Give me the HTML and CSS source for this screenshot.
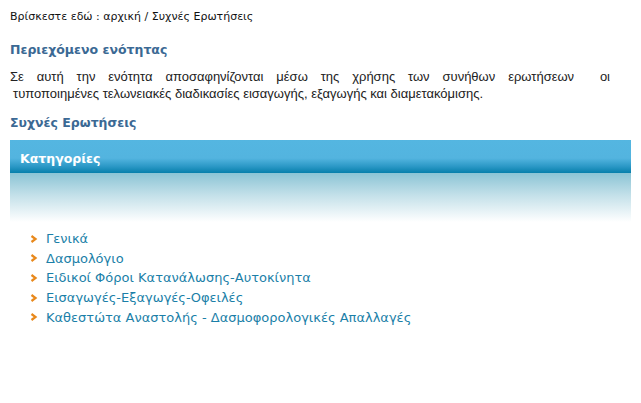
FILE: index.html
```html
<!DOCTYPE html>
<html lang="el">
<head>
<meta charset="utf-8">
<title>Συχνές Ερωτήσεις</title>
<link rel="stylesheet" href="styles.css">
</head>
<body>
<div class="page">
  <div class="crumb">Βρίσκεστε εδώ : <a href="#">αρχική</a> / Συχνές Ερωτήσεις</div>
  <h2 class="title">Περιεχόμενο ενότητας</h2>
  <p class="intro">
    <span class="line1">Σε αυτή την ενότητα αποσαφηνίζονται μέσω της χρήσης των συνήθων ερωτήσεων &nbsp;οι</span>
    <span class="line2">τυποποιημένες τελωνειακές διαδικασίες εισαγωγής, εξαγωγής και διαμετακόμισης.</span>
  </p>
  <h2 class="title faq">Συχνές Ερωτήσεις</h2>
  <div class="box">
    <div class="box-head">Κατηγορίες</div>
    <div class="box-fade"></div>
  </div>
  <ul class="cats">
    <li><svg class="arr" viewBox="0 0 8 8" width="8" height="8"><path d="M1.5 1 L5.5 4 L1.5 7" fill="none" stroke="#e8891c" stroke-width="2.2"/></svg><a href="#">Γενικά</a></li>
    <li><svg class="arr" viewBox="0 0 8 8" width="8" height="8"><path d="M1.5 1 L5.5 4 L1.5 7" fill="none" stroke="#e8891c" stroke-width="2.2"/></svg><a href="#">Δασμολόγιο</a></li>
    <li><svg class="arr" viewBox="0 0 8 8" width="8" height="8"><path d="M1.5 1 L5.5 4 L1.5 7" fill="none" stroke="#e8891c" stroke-width="2.2"/></svg><a href="#">Ειδικοί Φόροι Κατανάλωσης-Αυτοκίνητα</a></li>
    <li><svg class="arr" viewBox="0 0 8 8" width="8" height="8"><path d="M1.5 1 L5.5 4 L1.5 7" fill="none" stroke="#e8891c" stroke-width="2.2"/></svg><a href="#">Εισαγωγές-Εξαγωγές-Οφειλές</a></li>
    <li><svg class="arr" viewBox="0 0 8 8" width="8" height="8"><path d="M1.5 1 L5.5 4 L1.5 7" fill="none" stroke="#e8891c" stroke-width="2.2"/></svg><a href="#">Καθεστώτα Αναστολής - Δασμοφορολογικές Απαλλαγές</a></li>
  </ul>
</div>
</body>
</html>
```
FILE: styles.css
```css
html, body {
  margin: 0;
  padding: 0;
  background: #ffffff;
}
.page {
  padding: 10px 10px 0 10px;
  font-family: "DejaVu Sans", Verdana, sans-serif;
}
.crumb {
  font-family: "DejaVu Sans", sans-serif;
  font-size: 11px;
  line-height: 13px;
  color: #111111;
}
.crumb a {
  color: #111111;
  text-decoration: none;
}
.title {
  margin: 0;
  font-family: "DejaVu Sans", sans-serif;
  font-weight: bold;
  font-size: 12.5px;
  line-height: 16px;
  color: #3b6994;
  margin-top: 19px;
}
.intro {
  margin: 10px 0 0 0;
  width: 600px;
  font-family: "Liberation Sans", Arial, sans-serif;
  font-size: 13px;
  line-height: 17px;
  color: #222222;
}
.line1 {
  display: block;
  text-align: justify;
  text-align-last: justify;
}
.line2 {
  display: block;
  padding-left: 3px;
}
.faq {
  margin-top: 13px;
}
.box {
  margin-top: 9px;
  width: 621px;
}
.box-head {
  height: 33px;
  box-sizing: border-box;
  padding: 11px 0 0 10px;
  font-family: "DejaVu Sans", sans-serif;
  font-weight: bold;
  font-size: 12.5px;
  line-height: 16px;
  color: #ffffff;
  background: linear-gradient(to bottom, #54b6e1 0%, #53b4df 55%, #2b98c6 80%, #067fab 100%);
}
.box-fade {
  height: 49px;
  background: linear-gradient(to bottom, #8bc4d5 0%, #c3e0e9 45%, #ffffff 100%);
}
.cats {
  list-style: none;
  margin: 7px 0 0 0;
  padding: 0 0 0 20px;
}
.cats li {
  display: flex;
  align-items: center;
  height: 19.6px;
  font-size: 13px;
}
.arr {
  margin-right: 8px;
}
.cats a {
  color: #1b7fa8;
  text-decoration: none;
}
```
